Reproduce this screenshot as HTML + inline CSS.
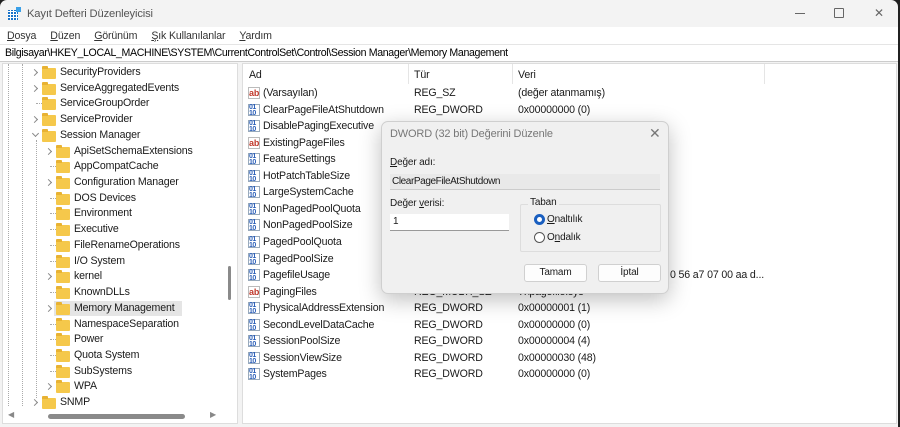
<!DOCTYPE html>
<html><head><meta charset="utf-8"><style>
*{margin:0;padding:0;box-sizing:border-box}
body{width:900px;height:427px;overflow:hidden;background:#202020;font-family:"Liberation Sans",sans-serif;font-size:10.6px;letter-spacing:-0.15px;color:#1a1a1a;position:relative}
.win{position:absolute;left:0;top:0;width:898px;height:427px;background:#f3f3f3;border-radius:7px 7px 0 0;overflow:hidden}
.a{position:absolute;white-space:nowrap}
.menu span{margin-right:14px}
.fold{position:absolute;width:14px;height:11px;background:#f5c84b;border-radius:1px}
.fold:before{content:"";position:absolute;left:0;top:-2px;width:6px;height:3px;background:#e8b233;border-radius:1px 1px 0 0}
.arr{position:absolute;width:5px;height:5px;border-right:1px solid #888;border-bottom:1px solid #888}
.ic{position:absolute;width:12px;height:12px;font-size:7px;line-height:6px;font-weight:bold;color:#2b5fb8;letter-spacing:-0.5px;border:1px solid #9ab;background:#fff}
.ab{position:absolute;width:12px;height:12px;font-size:9px;line-height:11px;font-weight:bold;color:#c0392b;border:1px solid #bbb;background:#fff;text-align:center}
.btn{position:absolute;height:18px;background:#fdfdfd;border:1px solid #d0d0d0;border-radius:3px;text-align:center;line-height:16px}
</style></head><body>
<div class="win">
<div class="a" style="left:8px;top:7px;width:13px;height:13px">
<div style="position:absolute;left:0;top:3px;width:10px;height:10px;background:repeating-linear-gradient(90deg,#1a73c9 0 2px,#fff 2px 3px)"></div>
<div style="position:absolute;left:0;top:3px;width:10px;height:10px;background:repeating-linear-gradient(0deg,transparent 0 2px,#fff 2px 3px)"></div>
<div style="position:absolute;left:8px;top:0;width:5px;height:5px;background:#3aa0e8"></div></div>
<div class="a" style="left:27px;top:8px;color:#555;font-size:11.2px">Kayıt Defteri Düzenleyicisi</div>
<div class="a" style="left:795px;top:13px;width:10px;border-top:1px solid #666"></div>
<div class="a" style="left:834px;top:8px;width:10px;height:10px;border:1px solid #666;border-radius:1px"></div>
<div class="a" style="left:874px;top:6px;color:#666;font-size:12px">✕</div>
<div class="a" style="left:0;top:27px;width:898px;height:17px;background:#fff"></div>
<div class="a menu" style="left:7px;top:30px;color:#333"><span><u>D</u>osya</span><span><u>D</u>üzen</span><span><u>G</u>örünüm</span><span><u>Ş</u>ık Kullanılanlar</span><span><u>Y</u>ardım</span></div>
<div class="a" style="left:0;top:44px;width:898px;height:18px;background:#fff;border-top:1px solid #e5e5e5;border-bottom:1px solid #ccc"></div>
<div class="a" style="left:5px;top:47px;color:#000;letter-spacing:-0.35px">Bilgisayar\HKEY_LOCAL_MACHINE\SYSTEM\CurrentControlSet\Control\Session Manager\Memory Management</div>
<div class="a" style="left:2px;top:63px;width:236px;height:361px;background:#fff;border:1px solid #ddd"></div>
<div class="a" style="left:8px;top:64px;height:346px;border-left:1px dotted #aaa"></div>
<div class="a" style="left:22px;top:64px;height:346px;border-left:1px dotted #aaa"></div>
<div class="a" style="left:36px;top:140px;height:258px;border-left:1px dotted #aaa"></div>
<div class="a" style="left:228px;top:266px;width:3px;height:34px;background:#8a8a8a;border-radius:2px"></div>
<div class="a" style="left:3px;top:407px;width:222px;height:14px;background:#fff"></div>
<div class="a" style="left:8px;top:410px;color:#888;font-size:8px">◀</div>
<div class="a" style="left:210px;top:410px;color:#888;font-size:8px">▶</div>
<div class="a" style="left:48px;top:414px;width:137px;height:5px;background:#8a8a8a;border-radius:3px"></div>
<div id="tree"></div>
<div class="a" style="left:242px;top:63px;width:655px;height:361px;background:#fff;border:1px solid #ddd"></div>
<div class="a" style="left:249px;top:69px">Ad</div>
<div class="a" style="left:414px;top:69px">Tür</div>
<div class="a" style="left:518px;top:69px">Veri</div>
<div class="a" style="left:408px;top:64px;height:20px;border-left:1px solid #e5e5e5"></div>
<div class="a" style="left:512px;top:64px;height:20px;border-left:1px solid #e5e5e5"></div>
<div class="a" style="left:764px;top:64px;height:20px;border-left:1px solid #e5e5e5"></div>
<div id="list"></div>
<div class="a" style="left:381px;top:121px;width:288px;height:173px;background:#f0f0f0;border:1px solid #cfcfcf;border-radius:7px;box-shadow:0 6px 22px rgba(0,0,0,.25)">
<div class="a" style="left:8px;top:6px;color:#777;font-size:11px">DWORD (32 bit) Değerini Düzenle</div>
<div class="a" style="left:267px;top:3px;color:#777;font-size:14px">✕</div>
<div class="a" style="left:8px;top:35px;font-size:10px"><u>D</u>eğer adı:</div>
<div class="a" style="left:8px;top:52px;width:270px;height:16px;background:#e9e9e9;border-bottom:1px solid #ccc;font-size:10px;padding:2px 2px;letter-spacing:-0.4px">ClearPageFileAtShutdown</div>
<div class="a" style="left:8px;top:76px;font-size:10px">Değer <u>v</u>erisi:</div>
<div class="a" style="left:8px;top:92px;width:119px;height:17px;background:#fff;border-bottom:1px solid #999;font-size:10px;padding:2px 3px">1</div>
<div class="a" style="left:138px;top:82px;width:141px;height:48px;border:1px solid #ddd;border-radius:2px"></div>
<div class="a" style="left:146px;top:75px;background:#f0f0f0;padding:0 2px;font-size:10px">Taban</div>
<div class="a" style="left:152px;top:92px;width:11px;height:11px;border-radius:50%;background:#1a5fc0;border:3px solid #1a5fc0"><div style="width:5px;height:5px;background:#fff;border-radius:50%"></div></div>
<div class="a" style="left:165px;top:92px;font-size:10px"><u>O</u>naltılık</div>
<div class="a" style="left:152px;top:110px;width:11px;height:11px;border-radius:50%;border:1px solid #555;background:#fff"></div>
<div class="a" style="left:165px;top:110px;font-size:10px">O<u>n</u>dalık</div>
<div class="btn" style="left:142px;top:142px;width:63px;font-size:10px">Tamam</div>
<div class="btn" style="left:216px;top:142px;width:63px;font-size:10px">İptal</div>
</div>
</div>
<script>
var t=[["SecurityProviders",0,">"],["ServiceAggregatedEvents",0,">"],["ServiceGroupOrder",0,""],["ServiceProvider",0,">"],["Session Manager",0,"v"],["ApiSetSchemaExtensions",1,">"],["AppCompatCache",1,""],["Configuration Manager",1,">"],["DOS Devices",1,""],["Environment",1,""],["Executive",1,""],["FileRenameOperations",1,""],["I/O System",1,""],["kernel",1,">"],["KnownDLLs",1,""],["Memory Management",1,">"],["NamespaceSeparation",1,""],["Power",1,""],["Quota System",1,""],["SubSystems",1,""],["WPA",1,">"],["SNMP",0,">"]];
var h="";t.forEach(function(r,i){var y=72+i*15.72,o=r[1]*14;
if(r[0]=="Memory Management")h+='<div class="a" style="left:54px;top:'+(y-7)+'px;width:128px;height:15px;background:#e5e5e5"></div>';
if(r[2]==">")h+='<div class="arr" style="left:'+(32+o)+'px;top:'+(y-2)+'px;transform:rotate(-45deg)"></div>';
else if(r[2]=="v")h+='<div class="arr" style="left:'+(33+o)+'px;top:'+(y-4)+'px;transform:rotate(45deg)"></div>';
else h+='<div class="a" style="left:'+(36+o)+'px;top:'+y+'px;width:6px;border-top:1px dotted #aaa"></div>';
h+='<div class="fold" style="left:'+(42+o)+'px;top:'+(y-4)+'px"></div><div class="a" style="left:'+(60+o)+'px;top:'+(y-6)+'px">'+r[0]+'</div>';});
document.getElementById("tree").innerHTML=h;
var L=[["(Varsayılan)",1,"REG_SZ","(değer atanmamış)"],["ClearPageFileAtShutdown",0,"REG_DWORD","0x00000000 (0)"],["DisablePagingExecutive",0,"",""],["ExistingPageFiles",1,"",""],["FeatureSettings",0,"",""],["HotPatchTableSize",0,"",""],["LargeSystemCache",0,"",""],["NonPagedPoolQuota",0,"",""],["NonPagedPoolSize",0,"",""],["PagedPoolQuota",0,"",""],["PagedPoolSize",0,"",""],["PagefileUsage",0,"","0 56 a7 07 00 aa d..."],["PagingFiles",1,"REG_MULTI_SZ","?:\\pagefile.sys"],["PhysicalAddressExtension",0,"REG_DWORD","0x00000001 (1)"],["SecondLevelDataCache",0,"REG_DWORD","0x00000000 (0)"],["SessionPoolSize",0,"REG_DWORD","0x00000004 (4)"],["SessionViewSize",0,"REG_DWORD","0x00000030 (48)"],["SystemPages",0,"REG_DWORD","0x00000000 (0)"]];
h="";L.forEach(function(r,i){var y=93+i*16.55;
h+=r[1]?'<div class="ab" style="left:248px;top:'+(y-6)+'px">ab</div>':'<div class="ic" style="left:248px;top:'+(y-6)+'px">01<br>10</div>';
h+='<div class="a" style="left:263px;top:'+(y-6)+'px">'+r[0]+'</div><div class="a" style="left:414px;top:'+(y-6)+'px">'+r[2]+'</div><div class="a" style="left:'+(i==11?670:518)+'px;top:'+(y-6)+'px">'+r[3]+'</div>';});
document.getElementById("list").innerHTML=h;
</script>
</body></html>
